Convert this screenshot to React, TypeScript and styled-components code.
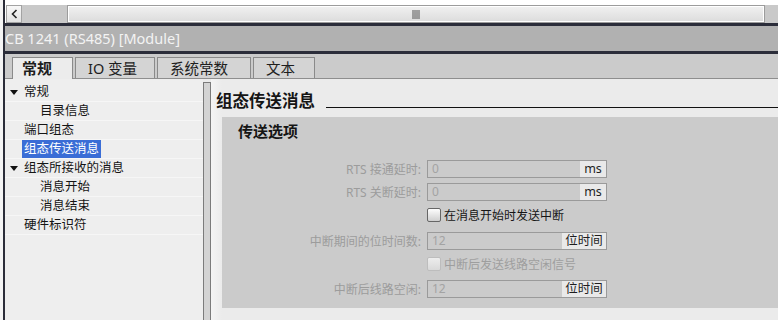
import React from 'react';
import styled, { createGlobalStyle } from 'styled-components';

const GlobalStyle = createGlobalStyle`
  html, body { margin: 0; padding: 0; background: #f4f4f4; }
  body {
    font-family: "Noto Sans", "Noto Sans CJK SC", sans-serif;
    font-size: 12px;
    color: #1a1a1a;
  }
  * { box-sizing: border-box; }
`;

const Frame = styled.div`
  width: 775px;
  height: 320px;
  margin-left: 3px;
  border-left: 2px solid #2b2d39;
  display: flex;
  flex-direction: column;
  overflow: hidden;
  background: #ebebeb;
`;

const TopStrip = styled.div`
  height: 23px;
  padding: 5px 0 0 1px;
  background: #ffffff;
  display: flex;
`;

const ArrowButton = styled.div`
  width: 16px;
  height: 18px;
  border: 1px solid #a3a3a3;
  background: linear-gradient(#f8f8f8, #e2e2e2);
  display: flex;
  align-items: center;
  justify-content: center;
`;

const Track = styled.div<{ $w: number }>`
  width: ${(p) => p.$w}px;
  height: 18px;
  background: #c9c9c9;
`;

const Thumb = styled.div`
  flex: 1;
  height: 18px;
  border: 1px solid #9c9c9c;
  box-shadow: inset 0 0 0 1px #ffffff;
  background: linear-gradient(#f1f1f1, #dcdcdc);
  display: flex;
  align-items: center;
  justify-content: center;
`;

const DarkBar = styled.div`
  height: 3px;
  background: #2b2d3a;
`;

const TitleBar = styled.div`
  height: 25px;
  background: #b1b1b1;
  color: #f3f3f3;
  font-size: 14.5px;
  line-height: 25px;
  white-space: nowrap;
`;

const TabBar = styled.div`
  height: 25px;
  background: #cbcbcb;
  border-bottom: 1px solid #8e8e8e;
  display: flex;
  align-items: flex-end;
  gap: 2px;
  padding-left: 7px;
`;

const Tab = styled.div<{ $w: number; $active?: boolean }>`
  width: ${(p) => p.$w}px;
  height: ${(p) => (p.$active ? 22 : 21)}px;
  margin-bottom: ${(p) => (p.$active ? -1 : 0)}px;
  border: 1px solid #8a8a8a;
  border-bottom: none;
  background: ${(p) => (p.$active ? '#ececec' : '#d4d4d4')};
  padding-left: ${(p) => (p.$active ? 9 : 12)}px;
  font-size: ${(p) => (p.$active ? 15 : 14.5)}px;
  font-weight: ${(p) => (p.$active ? 700 : 400)};
  line-height: 20px;
  color: #1e1e1e;
  white-space: nowrap;
`;

const Body = styled.div`
  flex: 1;
  display: flex;
  min-height: 0;
`;

const Tree = styled.div`
  width: 198px;
  background: #eeeeee;
  padding-top: 4px;
`;

const TreeRow = styled.div<{ $depth: number }>`
  height: 19px;
  border-bottom: 1px solid #f6f6f6;
  display: flex;
  align-items: center;
  padding-left: ${(p) => p.$depth * 16}px;
  font-size: 12.5px;
  white-space: nowrap;
`;

const Toggle = styled.div`
  width: 19px;
  height: 19px;
  display: flex;
  align-items: center;
  padding-left: 5px;
`;

const Triangle = styled.span`
  width: 0;
  height: 0;
  border-left: 4px solid transparent;
  border-right: 4px solid transparent;
  border-top: 5px solid #111111;
`;

const TreeLabel = styled.span<{ $selected?: boolean }>`
  height: 18px;
  line-height: 18px;
  padding: 0 2px;
  margin-left: -2px;
  background: ${(p) => (p.$selected ? '#3a6dd6' : 'transparent')};
  color: ${(p) => (p.$selected ? '#ffffff' : '#151515')};
`;

const Splitter = styled.div`
  width: 8px;
  margin-top: 3px;
  border: 1px solid #7b7b7b;
  border-bottom: none;
  background: #d3d3d3;
`;

const Content = styled.div`
  flex: 1;
  background: linear-gradient(90deg, #f4f4f4 0, #ebebeb 11px);
  padding: 12px 0 0 5px;
  display: flex;
  flex-direction: column;
`;

const HeadingRow = styled.div`
  height: 20px;
  display: flex;
`;

const HeadingText = styled.div`
  font-size: 16.5px;
  font-weight: 700;
  line-height: 20px;
  color: #151515;
  white-space: nowrap;
`;

const Rule = styled.div`
  flex: 1;
  height: 1px;
  margin: 16px 0 0 11px;
  background: #111111;
`;

const Panel = styled.div`
  margin: 6px 0 0 6px;
  height: 191px;
  background: #cbcbcb;
  padding: 4px 0 0 16px;
`;

const SectionTitle = styled.div`
  font-size: 15px;
  font-weight: 700;
  line-height: 20px;
  color: #151515;
`;

const Form = styled.div`
  margin-top: 16px;
  display: flex;
  flex-direction: column;
`;

const Row = styled.div<{ $top?: number }>`
  display: grid;
  grid-template-columns: 183px 180px;
  column-gap: 6px;
  height: 23px;
  align-items: center;
  margin-top: ${(p) => p.$top ?? 0}px;
`;

const Label = styled.div`
  text-align: right;
  color: #9c9c9c;
  font-size: 12px;
  white-space: nowrap;
`;

const Field = styled.div`
  grid-column: 2;
  height: 18px;
  border: 1px solid #9a9a9a;
  display: flex;
`;

const Value = styled.div`
  flex: 1;
  padding-left: 4px;
  line-height: 16px;
  color: #a3a3a3;
  font-size: 12px;
`;

const Unit = styled.div<{ $w: number }>`
  width: ${(p) => p.$w}px;
  background: #e9e9e9;
  line-height: 16px;
  text-align: center;
  color: #1e1e1e;
  font-size: 12.5px;
`;

const CheckLine = styled.label<{ $disabled?: boolean }>`
  grid-column: 2;
  display: flex;
  align-items: center;
  gap: 3px;
  font-size: 12px;
  white-space: nowrap;
  color: ${(p) => (p.$disabled ? '#9e9e9e' : '#151515')};
`;

const Box = styled.span<{ $disabled?: boolean }>`
  width: 14px;
  height: 14px;
  border-radius: 2px;
  border: 1px solid ${(p) => (p.$disabled ? '#bdbdbd' : '#666666')};
  background: ${(p) =>
    p.$disabled ? 'linear-gradient(#ededed, #d9d9d9)' : 'linear-gradient(#fdfdfd, #cfcfcf)'};
`;

const treeItems = [
  { text: '常规', depth: 0, open: true },
  { text: '目录信息', depth: 1 },
  { text: '端口组态', depth: 0 },
  { text: '组态传送消息', depth: 0, selected: true },
  { text: '组态所接收的消息', depth: 0, open: true },
  { text: '消息开始', depth: 1 },
  { text: '消息结束', depth: 1 },
  { text: '硬件标识符', depth: 0 },
];

const tabs = [
  { text: '常规', w: 61, active: true },
  { text: 'IO 变量', w: 80 },
  { text: '系统常数', w: 94 },
  { text: '文本', w: 62 },
];

function Input({ value, unit, unitWidth }: { value: string; unit: string; unitWidth: number }) {
  return (
    <Field>
      <Value>{value}</Value>
      <Unit $w={unitWidth}>{unit}</Unit>
    </Field>
  );
}

export default function App() {
  return (
    <>
      <GlobalStyle />
      <Frame>
        <TopStrip>
          <ArrowButton>
            <svg width="7" height="10" viewBox="0 0 7 10">
              <path d="M5.5 1 L1.5 5 L5.5 9" fill="none" stroke="#222" strokeWidth="1.6" />
            </svg>
          </ArrowButton>
          <Track $w={45} />
          <Thumb>
            <svg width="9" height="9" viewBox="0 0 9 9">
              <path d="M1 0V9M3 0V9M5 0V9M7 0V9" stroke="#555" strokeWidth="1" />
            </svg>
          </Thumb>
          <Track $w={13} />
        </TopStrip>
        <DarkBar />
        <TitleBar>CB 1241 (RS485) [Module]</TitleBar>
        <DarkBar />
        <TabBar>
          {tabs.map((t) => (
            <Tab key={t.text} $w={t.w} $active={t.active}>
              {t.text}
            </Tab>
          ))}
        </TabBar>
        <Body>
          <Tree>
            {treeItems.map((item) => (
              <TreeRow key={item.text} $depth={item.depth}>
                <Toggle>{item.open && <Triangle />}</Toggle>
                <TreeLabel $selected={item.selected}>{item.text}</TreeLabel>
              </TreeRow>
            ))}
          </Tree>
          <Splitter />
          <Content>
            <HeadingRow>
              <HeadingText>组态传送消息</HeadingText>
              <Rule />
            </HeadingRow>
            <Panel>
              <SectionTitle>传送选项</SectionTitle>
              <Form>
                <Row>
                  <Label>RTS 接通延时:</Label>
                  <Input value="0" unit="ms" unitWidth={26} />
                </Row>
                <Row>
                  <Label>RTS 关断延时:</Label>
                  <Input value="0" unit="ms" unitWidth={26} />
                </Row>
                <Row>
                  <CheckLine>
                    <Box />
                    在消息开始时发送中断
                  </CheckLine>
                </Row>
                <Row $top={3}>
                  <Label>中断期间的位时间数:</Label>
                  <Input value="12" unit="位时间" unitWidth={44} />
                </Row>
                <Row>
                  <CheckLine $disabled>
                    <Box $disabled />
                    中断后发送线路空闲信号
                  </CheckLine>
                </Row>
                <Row $top={2}>
                  <Label>中断后线路空闲:</Label>
                  <Input value="12" unit="位时间" unitWidth={44} />
                </Row>
              </Form>
            </Panel>
          </Content>
        </Body>
      </Frame>
    </>
  );
}
